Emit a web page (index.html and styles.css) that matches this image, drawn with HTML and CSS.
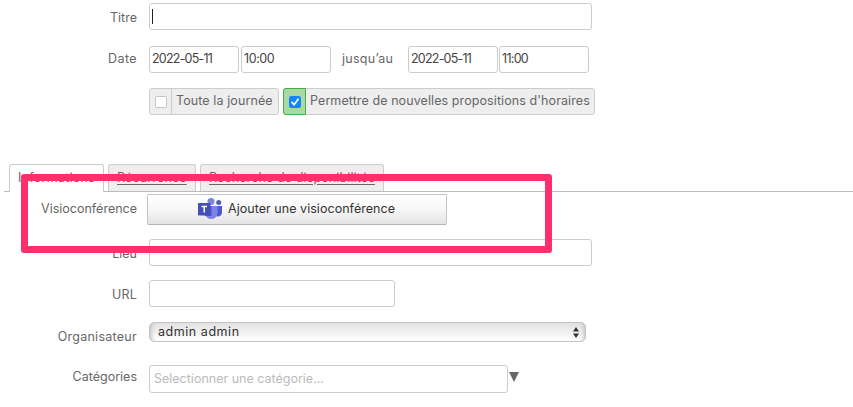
FILE: index.html
```html
<!DOCTYPE html>
<html lang="fr">
<head>
<meta charset="utf-8">
<title>Événement</title>
<link rel="stylesheet" href="styles.css">
</head>
<body>
<form class="event">
  <div class="row row-title"><span class="label"><span class="t-titre">Titre</span></span><div class="field wide"><i class="caret"></i></div></div>
  <div class="row row-date">
    <span class="label"><span class="t-date">Date</span></span>
    <div class="field date"><span class="t-day">2022-05-11</span></div><div class="field time"><span class="t-ten">10:00</span></div>
    <span class="until"><span class="t-until">jusqu’au</span></span>
    <div class="field date"><span class="t-day">2022-05-11</span></div><div class="field time end"><span class="t-eleven">11:00</span></div>
  </div>
  <div class="row row-options">
    <span class="label"></span>
    <div class="option all-day"><span class="tick"><i class="box"></i></span><span class="option-text"><span class="t-allday">Toute la journée</span></span></div>
    <div class="option proposals"><span class="tick on"><svg class="check" viewBox="0 0 12 12"><rect width="12" height="12" rx="2.5" fill="#1484fc"/><path d="M3 6.4 5.1 8.8 9.1 3.2" fill="none" stroke="#fff" stroke-width="1.7" stroke-linecap="round" stroke-linejoin="round"/></svg></span><span class="option-text"><span class="t-proposals">Permettre de nouvelles propositions d'horaires</span></span></div>
  </div>
  <nav class="tabs">
    <a class="tab active"><span class="t-info">Informations</span></a>
    <a class="tab recurrence"><span class="t-rec">Récurrence</span></a>
    <a class="tab search"><span class="t-search">Recherche de disponibilités</span></a>
  </nav>
  <div class="row row-visio">
    <span class="label"><span class="t-visio">Visioconférence</span></span>
    <div class="button">
      <svg class="teams" viewBox="0 0 24 22">
        <circle cx="20.7" cy="4.6" r="2.5" fill="#5059c9"/>
        <path d="M16 8h8v6.5a4 4 0 0 1-7 2.7z" fill="#5059c9"/>
        <circle cx="13" cy="3.5" r="3.5" fill="#7b83eb"/>
        <path d="M7 8h12.5v7.5a6.3 6.3 0 0 1-12.5 0z" fill="#7b83eb"/>
        <path d="M7 8h6.5v10H7z" fill="#535bbf"/>
        <rect y="5" width="12.5" height="12.5" rx="1" fill="#464eb8"/>
        <path d="M3.5 8.4H9M6.25 8.4v6.2" fill="none" stroke="#fff" stroke-width="1.5"/>
      </svg>
      <span class="t-add">Ajouter une visioconférence</span>
    </div>
  </div>
  <div class="row row-place"><span class="label"><span class="t-lieu">Lieu</span></span><div class="field wide"></div></div>
  <div class="row row-url"><span class="label"><span class="t-url">URL</span></span><div class="field url"></div></div>
  <div class="row row-owner">
    <span class="label"><span class="t-owner">Organisateur</span></span>
    <div class="select"><span class="t-admin">admin admin</span><svg class="arrows" viewBox="0 0 6 11"><path d="M0 4.5 3 0l3 4.5zM0 6.5 3 11l3-4.5z" fill="#333"/></svg></div>
  </div>
  <div class="row row-categories">
    <span class="label"><span class="t-cat">Catégories</span></span>
    <div class="field category"><span class="t-select">Selectionner une catégorie...</span></div>
    <svg class="drop" viewBox="0 0 10 10"><path d="M0 0h10L5 10z" fill="#666"/></svg>
  </div>
</form>
<div class="highlight"></div>
</body>
</html>
```
FILE: styles.css
```css
* { box-sizing: border-box; }
body { margin: 0; height: 407px; overflow: hidden; background: #fff; color: #666; font: 12.5px/16px Inter, sans-serif; }
.event { padding-top: 3px; }
.row { display: flex; height: 27px; }
.row span, .tab span, .button span { white-space: nowrap; }
.label { width: 137px; margin-right: 12px; padding-top: 7px; display: flex; justify-content: flex-end; flex: none; }
.field { height: 27px; border: 1px solid #ccc; border-radius: 3px; background: #fff; color: #444; padding: 4px 2px; flex: none; }
.wide { width: 443px; }
.caret { display: block; width: 1px; height: 15px; margin-top: 1px; background: #222; }
.row-date { margin-top: 16px; }
.row-date .label { padding-top: 5px; }
.date { width: 90px; margin-right: 2px; }
.time { width: 90px; }
.until { width: 77px; padding: 5px 0 0 11px; }
.until + .date { margin-right: 1px; }
.t-date { letter-spacing: 0.4px; }
.t-day { letter-spacing: -0.78px; }
.t-ten { letter-spacing: -0.4px; }
.t-eleven { letter-spacing: -0.7px; }
.t-until { letter-spacing: 0.25px; }
.t-proposals { letter-spacing: 0.09px; }
.t-allday { letter-spacing: 0.1px; }
.t-info { letter-spacing: 0.25px; }
.t-rec { letter-spacing: 0.15px; }
.t-search { letter-spacing: 0.12px; }
.t-owner { letter-spacing: 0.27px; }
.t-admin { letter-spacing: 0.55px; }
.t-url { letter-spacing: 0.2px; }
.t-add { letter-spacing: 0.04px; }
.row-options { margin-top: 15px; }
.option { display: flex; height: 27px; border: 1px solid #ccc; border-radius: 3px; background: #eee; margin-right: 4px; }
.all-day { width: 130px; }
.proposals { width: 312px; }
.tick { width: 22px; border-right: 1px solid #ccc; padding: 7px 0 0 5px; flex: none; }
.tick.on { width: 23px; margin: -1px 0 -1px -1px; border: 1px solid #46ac46; border-radius: 3px 0 0 3px; background: #a9d9a4; padding: 7px 0 0 5px; }
.box { display: block; width: 12px; height: 12px; border: 1px solid #c6c6c6; border-radius: 2px; background: #fff; }
.check { display: block; width: 12px; height: 12px; }
.option-text { padding: 4px 0 0 4px; }
.tabs { display: flex; align-items: flex-start; height: 28px; margin: 49px 0 0 4px; padding-left: 5px; border-bottom: 1px solid #bbb; }
.tab { height: 27px; border: 1px solid #ccc; border-bottom: 0; border-radius: 3px 3px 0 0; background: #eee; padding: 5px 0 0 8px; margin-right: 4px; text-decoration: underline; text-underline-offset: 2px; }
.tab.active { width: 95px; height: 28px; background: #fff; text-decoration: none; }
.recurrence { width: 88px; }
.search { width: 184px; }
.row-visio { height: 31px; margin-top: 2px; }
.row-visio .label { margin-right: 10px; }
.button { width: 300px; height: 31px; border: 1px solid #c4c4c4; border-bottom-color: #b5b5b5; border-radius: 2px; background: linear-gradient(#fff, #f8f8f8 45%, #e4e4e4); color: #333; display: flex; align-items: flex-start; padding: 3px 0 0 50px; }
.teams { width: 24px; height: 22px; margin-right: 6px; }
.button span { margin-top: 3px; }
.row-place { margin-top: 14px; }
.row-url { margin-top: 14px; }
.url { width: 246px; }
.row-owner { height: 20px; margin-top: 15px; }
.select { width: 437px; height: 20px; border: 1px solid #c4c4c4; border-radius: 5px; background: linear-gradient(#e2e2e2, #f0f0f0 50%, #fff); box-shadow: inset 5px 0 4px -4px #bbb, inset -5px 0 4px -4px #bbb; color: #333; display: flex; justify-content: space-between; padding: 1px 6px 0 8px; }
.arrows { width: 6px; height: 11px; margin-top: 3px; }
.row-categories { height: 28px; margin-top: 23px; }
.row-categories .label { padding-top: 4px; }
.category { width: 359px; height: 28px; padding: 5px 4px; color: #bbb; }
.drop { width: 10px; height: 10px; margin: 7px 0 0 1px; }
.highlight { position: absolute; left: 21px; top: 174px; width: 531px; height: 79px; border: 7px solid #ff2f6c; border-radius: 3px; }
```
